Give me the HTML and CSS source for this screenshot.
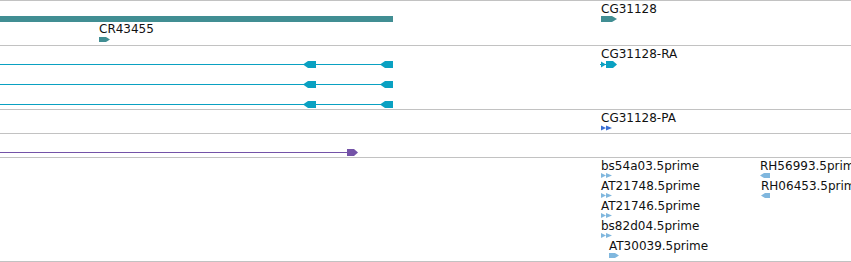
FILE: index.html
```html
<!DOCTYPE html>
<html lang="en">
<head>
    <meta charset="UTF-8">
    <title>Tracks</title>
    <link rel="stylesheet" href="styles.css">
</head>
<body>
    <div class="tracks">
        <!-- genes -->
        <div class="track track-genes">
            <svg class="glyphs" width="851" height="44">
                <rect class="gene" x="0" y="15" width="393" height="6"/>
                <polygon class="gene" points="99,36 106,36 110,38.5 106,41 99,41"/>
                <polygon class="gene" points="601,15 612,15 617,18 612,21 601,21"/>
            </svg>
            <span class="label" style="left:99px; top:21px">CR43455</span>
            <span class="label" style="left:601px; top:1px">CG31128</span>
        </div>

        <!-- transcripts -->
        <div class="track track-mrna">
            <svg class="glyphs" width="851" height="63">
                <g class="mrna">
                    <rect x="0" y="18" width="393" height="1"/>
                    <polygon points="303,18.5 308,15 316,15 316,22 308,22"/>
                    <polygon points="380,18.5 385,15 393,15 393,22 385,22"/>

                    <rect x="0" y="38" width="393" height="1"/>
                    <polygon points="303,38.5 308,35 316,35 316,42 308,42"/>
                    <polygon points="380,38.5 385,35 393,35 393,42 385,42"/>

                    <rect x="0" y="58" width="393" height="1"/>
                    <polygon points="303,58.5 308,55 316,55 316,62 308,62"/>
                    <polygon points="380,58.5 385,55 393,55 393,62 385,62"/>

                    <rect x="600" y="18" width="10" height="1"/>
                    <polygon points="601,15.5 606,18.5 601,21.5"/>
                    <polygon points="606,15 613,15 617,18.5 613,22 606,22"/>
                </g>
            </svg>
            <span class="label" style="left:601px; top:1px">CG31128-RA</span>
        </div>

        <!-- proteins -->
        <div class="track track-protein">
            <svg class="glyphs" width="851" height="23">
                <g class="protein">
                    <polygon points="601,15.5 606,18 601,20.5"/>
                    <polygon points="606,15.5 612,18 606,20.5"/>
                </g>
            </svg>
            <span class="label" style="left:601px; top:1px">CG31128-PA</span>
        </div>

        <!-- alignments -->
        <div class="track track-align">
            <svg class="glyphs" width="851" height="23">
                <g class="align">
                    <rect x="0" y="18" width="348" height="1"/>
                    <polygon points="347,15 354,15 358,18.5 354,22 347,22"/>
                </g>
            </svg>
        </div>

        <!-- ESTs -->
        <div class="track track-est">
            <svg class="glyphs" width="851" height="103">
                <g class="est">
                    <polygon points="601,15 606,17.5 601,20"/>
                    <polygon points="606,15 612,17.5 606,20"/>
                    <polygon points="601,35 606,37.5 601,40"/>
                    <polygon points="606,35 612,37.5 606,40"/>
                    <polygon points="601,55 606,57.5 601,60"/>
                    <polygon points="606,55 612,57.5 606,60"/>
                    <polygon points="601,75 606,77.5 601,80"/>
                    <polygon points="606,75 612,77.5 606,80"/>
                    <polygon points="609,95 615,95 619,97.5 615,100 609,100"/>
                    <polygon points="760,17.5 764,15 770,15 770,20 764,20"/>
                    <polygon points="761,37.5 765,35 770,35 770,40 765,40"/>
                </g>
            </svg>
            <span class="label" style="left:601px; top:1px">bs54a03.5prime</span>
            <span class="label" style="left:601px; top:21px">AT21748.5prime</span>
            <span class="label" style="left:601px; top:41px">AT21746.5prime</span>
            <span class="label" style="left:601px; top:61px">bs82d04.5prime</span>
            <span class="label" style="left:609px; top:81px">AT30039.5prime</span>
            <span class="label" style="left:760px; top:1px">RH56993.5prime</span>
            <span class="label" style="left:761px; top:21px">RH06453.5prime</span>
        </div>
    </div>
</body>
</html>
```

FILE: styles.css
```css
body {
    margin: 0;
    padding: 0;
    background-color: #fff;
    font-family: 'DejaVu Sans', Verdana, sans-serif;
    font-size: 12px;
    color: #111;
    overflow: hidden;
}

.tracks {
    width: 851px;
    border-top: 1px solid #c2c2c2;
}

.track {
    position: relative;
    overflow: hidden;
    border-bottom: 1px solid #c2c2c2;
}

.track-genes {
    height: 44px;
}

.track-mrna {
    height: 63px;
}

.track-protein,
.track-align {
    height: 23px;
}

.track-est {
    height: 103px;
}

.glyphs {
    display: block;
}

.label {
    position: absolute;
    line-height: 14px;
    white-space: nowrap;
}

.gene {
    fill: #418e93;
}

.mrna {
    fill: #0aa1c2;
}

.protein {
    fill: #3a6fd4;
}

.align {
    fill: #7453a8;
}

.est {
    fill: #80b7de;
}
```
